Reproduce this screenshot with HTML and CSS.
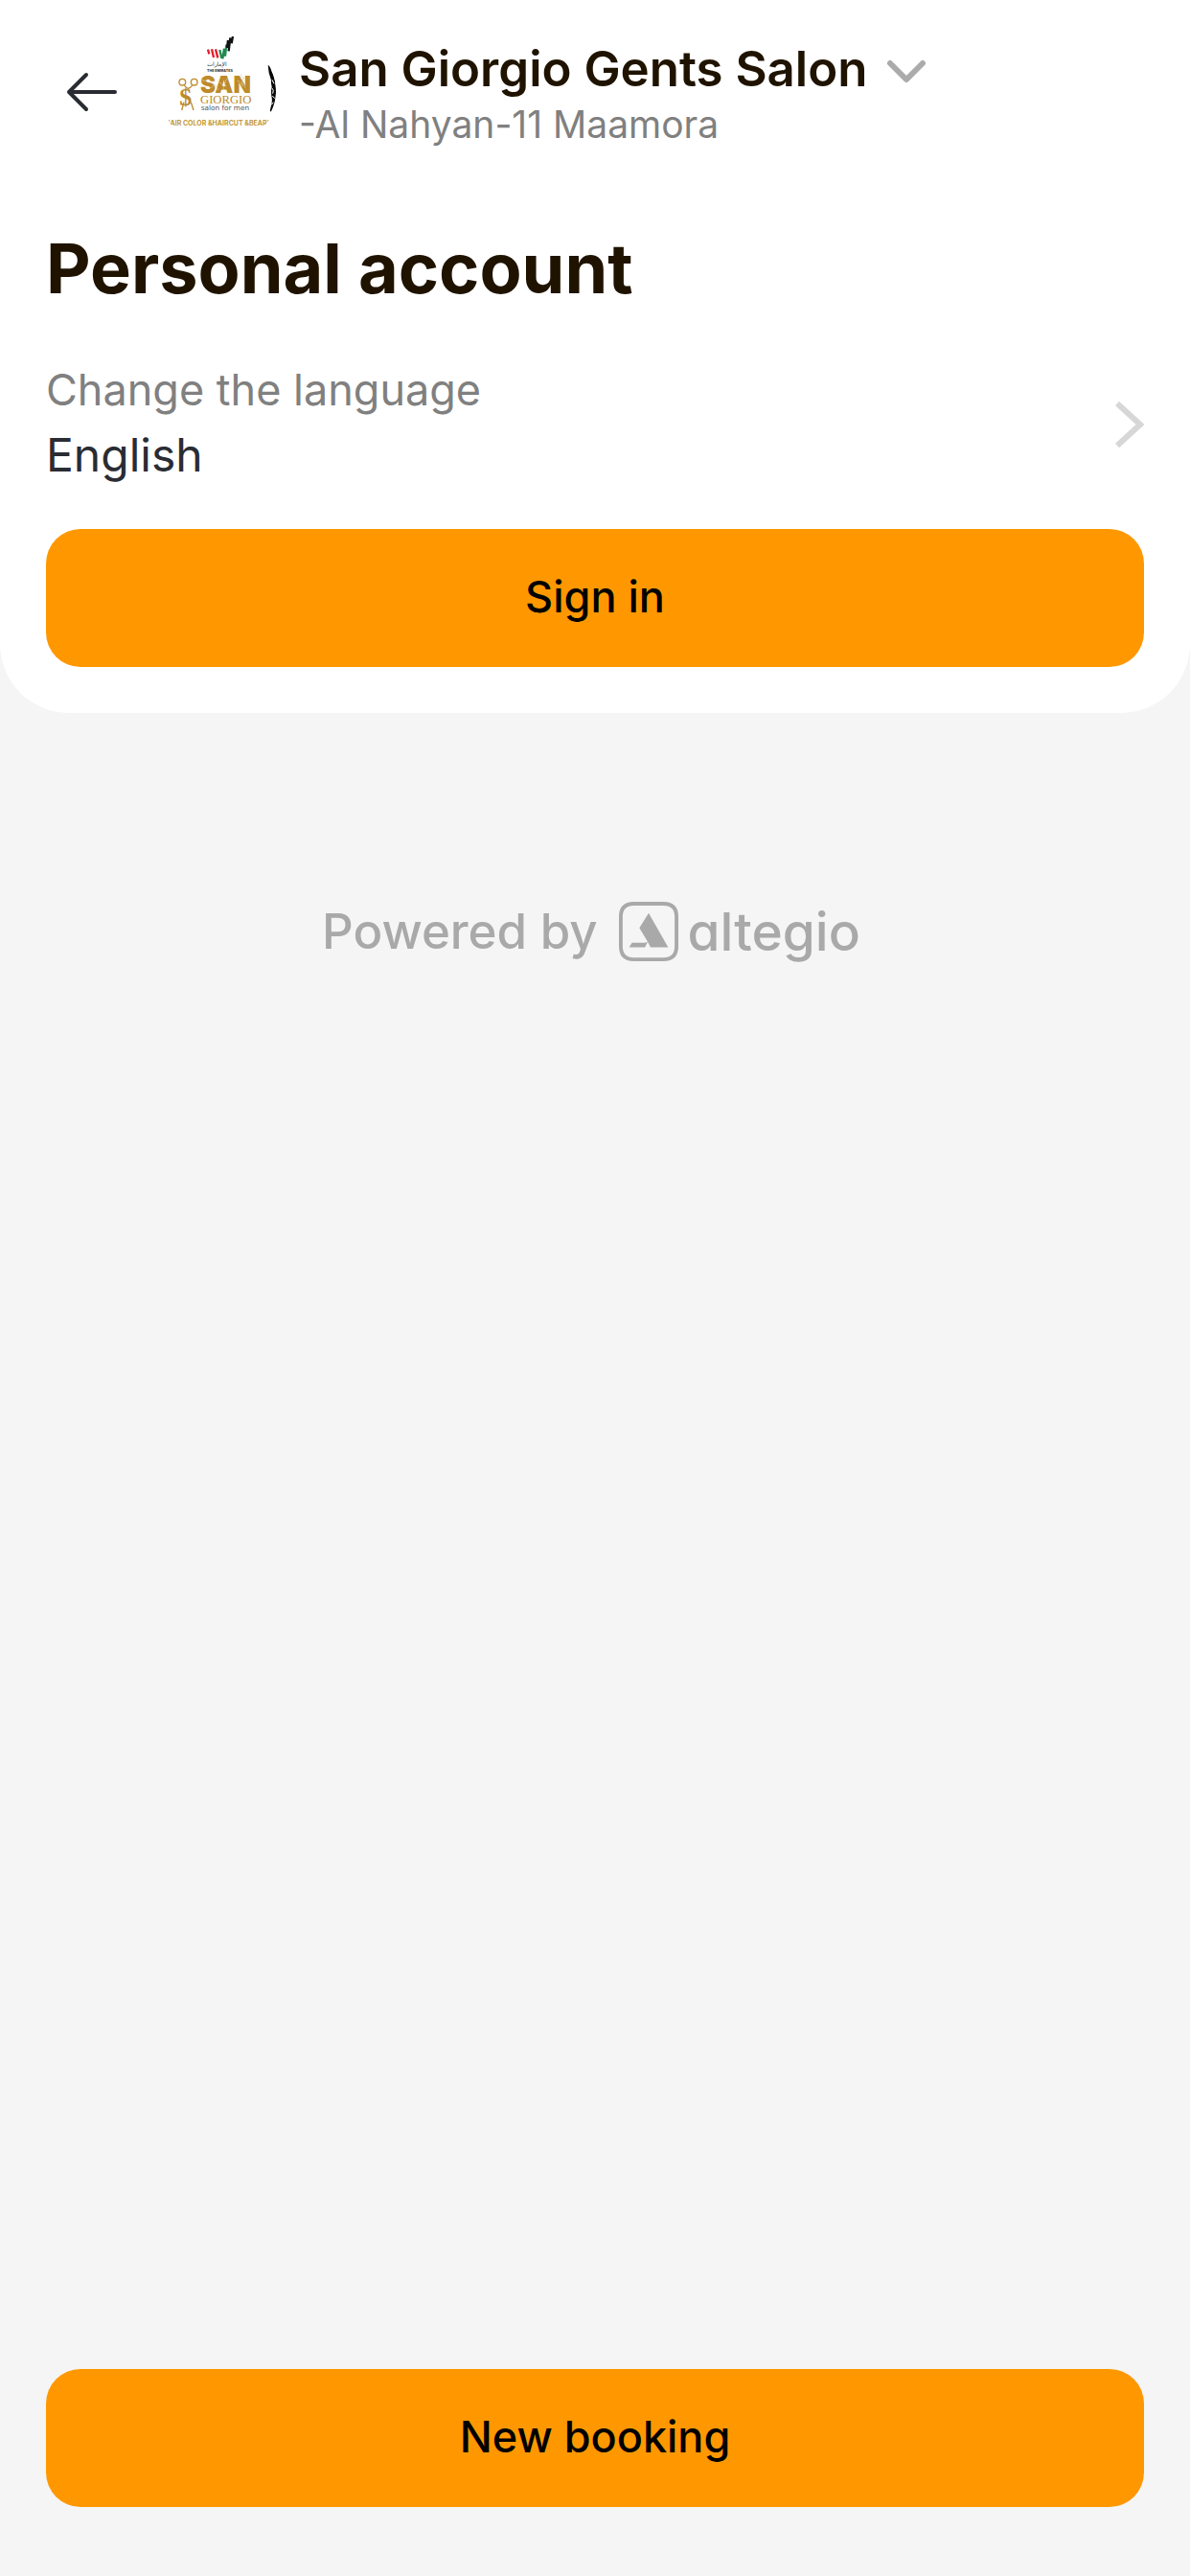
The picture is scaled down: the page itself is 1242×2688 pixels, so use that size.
FILE: index.html
```
<!DOCTYPE html>
<html lang="en">
<head>
  <meta charset="UTF-8">
  <meta name="viewport" content="width=device-width, initial-scale=1.0">
  <title>Personal account</title>
  <link rel="stylesheet" href="styles.css">
</head>
<body>
  <div class="page">
    <div class="panel">
      <header class="header">
        <button type="button" class="back-button" aria-label="Back">
          <svg width="72" height="72" viewBox="0 0 72 72" fill="none" stroke="#2a2c33" stroke-width="4" stroke-linecap="round" stroke-linejoin="round">
            <path d="M60 36H12M30 18L12 36l18 18"/>
          </svg>
        </button>
        <svg class="logo" viewBox="24 48 360 360" role="img" aria-label="San Giorgio salon for men">
          <clipPath id="logo-clip"><circle cx="204" cy="228" r="180"/></clipPath>
          <g clip-path="url(#logo-clip)">
            <!-- flag strokes -->
            <g fill="none" stroke-width="7">
              <path stroke="#e3202e" d="M171 95l4 14M183 94l6 26M195 94l7 27"/>
              <path stroke="#22894f" d="M208 96l6 26M222 92l-5 32M229 80l-4 36"/>
              <path stroke="#111" d="M234 66l-3 24M241 58l-5 42M249 54l-4 22"/>
            </g>
            <text class="logo-arabic" x="169" y="146">الإمارات</text>
            <text class="logo-emirates" x="168" y="164">THE EMIRATES</text>
            <!-- scissors with dollar sign -->
            <g fill="none" stroke="#bd8a2c" stroke-width="4">
              <circle cx="91" cy="197" r="10"/>
              <circle cx="128" cy="197" r="10"/>
              <path d="M97 207q5 8 12 10q8-2 13-10M96 260l-7 25M118 260l8 25"/>
            </g>
            <text class="logo-dollar" x="82" y="269">$</text>
            <text class="logo-san" x="147" y="231">SAN</text>
            <path d="M152 190q10 8 20-2M180 216q16-22 22 6M206 196q18 12 14 24M232 186q-14 16-4 26M262 192q18 6 14 20M284 182q-14 20 6 34M276 172q-6 8 8 12" fill="none" stroke="#e5cf9f" stroke-width="2"/>
            <text class="logo-giorgio" x="147" y="263">GIORGIO</text>
            <text class="logo-tagline" x="149" y="284">salon for men</text>
            <text class="logo-services" x="204" y="332">HAIR COLOR &amp;HAIRCUT &amp;BEARD</text>
            <path d="M359 144q8 4 11 18q13 25 14 56q2 36-15 71q-6 2-1-14q5-15 3-29q-4-20 0-35q-3-10-2-20q-9-22-10-47z" fill="#080808"/>
            <path d="M372 190l6 12M371 215q8 6 3 18M373 240l7 8M370 268l6-8" fill="none" stroke="#fff" stroke-width="3"/>
          </g>
        </svg>
        <div class="salon">
          <button type="button" class="salon-name">
            San Giorgio Gents Salon
            <svg class="salon-arrow" width="42" height="26" viewBox="0 0 42 26" fill="none" stroke="#ababab" stroke-width="6" stroke-linecap="round" stroke-linejoin="round">
              <path d="M4 4l17 17L38 4"/>
            </svg>
          </button>
          <div class="salon-address">-Al Nahyan-11 Maamora</div>
        </div>
      </header>

      <main class="account">
        <h1 class="title">Personal account</h1>
        <button type="button" class="language">
          <span class="language-text">
            <span class="language-label">Change the language</span>
            <span class="language-value">English</span>
          </span>
          <svg width="30" height="48" viewBox="0 0 30 48" fill="none" stroke="#d7d7d7" stroke-width="6">
            <path d="M2 2l24 22L2 46"/>
          </svg>
        </button>
        <button type="button" class="main-button">Sign in</button>
      </main>
    </div>

    <a href="#" class="powered">
      <span>Powered by</span>
      <span class="brand">
        <svg width="62" height="62" viewBox="0 0 64 64">
          <path d="M16 2H48Q62 2 62 16V48Q62 62 48 62H16Q2 62 2 48V16Q2 2 16 2Z" fill="none" stroke="#a9a9a9" stroke-width="4"/>
          <path d="M32 12L53 49H34L31 43L28 49H11L14 44H28L31 43L22 28Z" fill="#a9a9a9"/>
        </svg>
        <span class="brand-name">altegio</span>
      </span>
    </a>

    <footer class="footer">
      <button type="button" class="main-button">New booking</button>
    </footer>
  </div>
</body>
</html>
```
FILE: styles.css
```
* {
  box-sizing: border-box;
}
body {
  margin: 0;
  background: #f5f5f5;
  font-family: Inter, "Liberation Sans", sans-serif;
  color: #1f1300;
}
button {
  padding: 0;
  border: none;
  background: none;
  font-family: inherit;
  color: inherit;
  cursor: pointer;
}
svg {
  display: block;
  flex-shrink: 0;
}
.page {
  min-height: 100vh;
  display: flex;
  flex-direction: column;
}
.panel {
  background: white;
  border-radius: 0 0 72px 72px;
  padding-bottom: 48px;
}
.header {
  display: flex;
  align-items: center;
  gap: 24px;
  padding: 36px 48px;
}
.back-button {
  padding: 12px;
}
.logo {
  width: 120px;
  height: 120px;
}
.logo-arabic {
  font: 18px "DejaVu Sans", sans-serif;
  fill: #333;
}
.logo-emirates {
  font: 700 11px Inter, sans-serif;
  fill: #222;
}
.logo-dollar {
  font: 700 78px "Liberation Serif", serif;
  fill: #bd8a2c;
}
.logo-san {
  font: 900 72px Inter, sans-serif;
  fill: #bd8a2c;
}
.logo-giorgio {
  font: 38px "Liberation Serif", serif;
  fill: #bd8a2c;
}
.logo-tagline {
  font: 22px "DejaVu Sans", sans-serif;
  fill: #555;
}
.logo-services {
  font: 700 21px Inter, sans-serif;
  fill: #c39a3a;
  text-anchor: middle;
}
.salon {
  padding-top: 4px;
}
.salon-name {
  display: flex;
  align-items: center;
  gap: 20px;
  font-size: 51px;
  font-weight: 600;
  line-height: 64px;
}
.salon-arrow {
  margin-top: 6px;
}
.salon-address {
  font-size: 39px;
  line-height: 52px;
  color: #808080;
}
.account {
  display: flex;
  flex-direction: column;
  padding: 44px 48px 0;
}
.title {
  margin: 0;
  font-size: 72px;
  font-weight: 700;
  line-height: 88px;
}
.language {
  display: flex;
  align-items: center;
  justify-content: space-between;
  margin: 50px 0 40px;
  text-align: left;
}
.language-text {
  display: flex;
  flex-direction: column;
}
.language-label {
  font-size: 45px;
  line-height: 66px;
  color: #808080;
}
.language-value {
  font-size: 48px;
  line-height: 70px;
  padding-bottom: 2px;
  color: #2a2c33;
}
.main-button {
  width: 100%;
  height: 144px;
  padding-bottom: 4px;
  border-radius: 36px;
  background: #ff9800;
  font-size: 45px;
  font-weight: 500;
  color: black;
}
.powered {
  display: flex;
  align-items: center;
  justify-content: center;
  gap: 22px;
  margin: 196px 8px 0 0;
  font-size: 51px;
  font-weight: 500;
  line-height: 64px;
  color: #a9a9a9;
  text-decoration: none;
}
.brand {
  display: flex;
  align-items: center;
  gap: 10px;
}
.brand-name {
  font-size: 55px;
  font-weight: 500;
  font-feature-settings: "cv11";
}
.footer {
  margin-top: auto;
  padding: 24px 48px 72px;
}
```
